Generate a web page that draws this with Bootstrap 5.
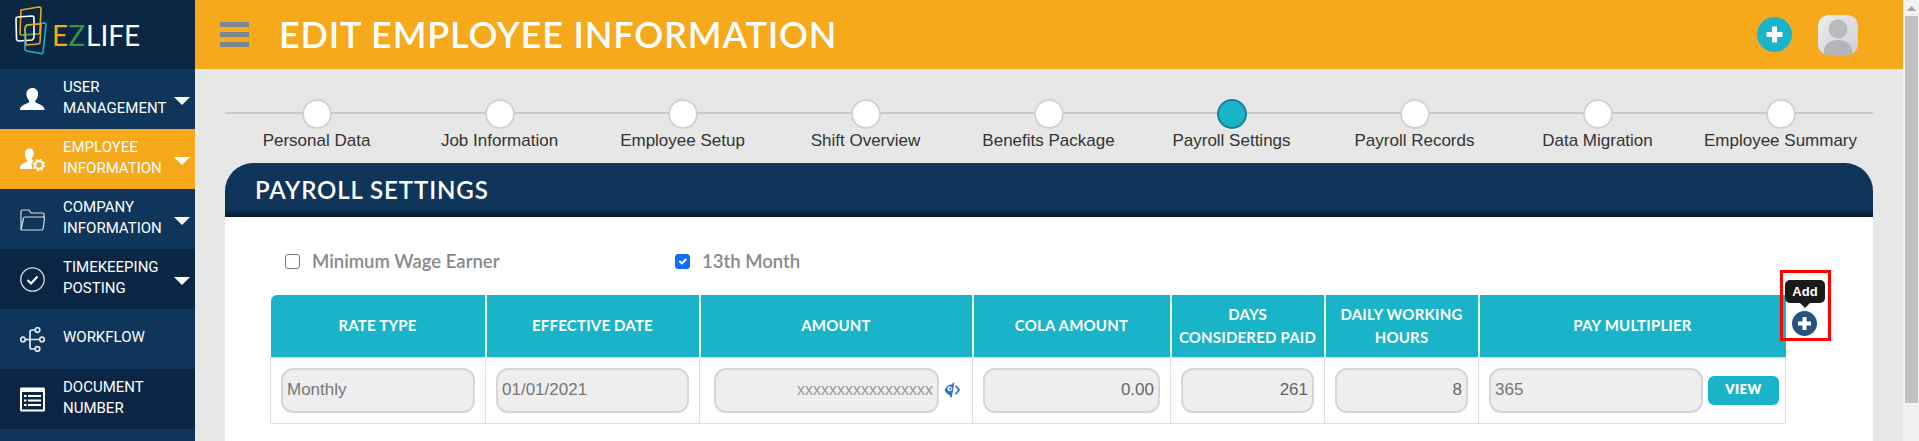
<!DOCTYPE html>
<html lang="en">
<head>
<meta charset="utf-8">
<title>Edit Employee Information</title>
<link rel="stylesheet" href="https://cdn.jsdelivr.net/npm/bootstrap@5.3.0/dist/css/bootstrap.min.css">
<style>
html,body{height:441px;overflow:hidden;margin:0}
body{background:#e7e7e7;font-family:"Liberation Sans",Arial,sans-serif}
.shell{height:441px;width:1919px}
.side{width:195px;flex:none;background:#10355a;overflow:hidden}
.brand{height:69px;background:#0a2744;padding-left:14px;padding-bottom:6px}
.brand-word{font-family:Lato,sans-serif;font-size:28px;line-height:1;font-weight:400;color:#fff;margin-left:1px;padding-top:6px}
.brand-word .e{color:#f7a91c}.brand-word .z{color:#3f8f46;margin-right:1px}
.mitem{height:60px;padding:0 5px 0 20px;background:#10355a;color:#fff;font-family:Roboto,sans-serif;font-size:15px;line-height:21px;text-transform:uppercase}
.mitem.alt{background:#0a2644}
.mitem.on{background:#f7a91c}
.mico{width:25px;height:25px;flex:none;margin-right:18px;display:block}
.mtext{flex:1;padding-bottom:3px}
.caret-w{width:0;height:0;border-left:8px solid transparent;border-right:8px solid transparent;border-top:8px solid #fff;flex:none;margin-top:3px}
.mainarea{flex:1;min-width:0}
.topbar{height:69px;background:#f7a91c;padding-left:25px;padding-right:45px}
.burger{width:29px;flex:none;margin-right:30px}
.burger span{display:block;height:5px;background:#7d8792;margin-bottom:5px}
.burger span:last-child{margin-bottom:0}
.ptitle{font-family:Lato,sans-serif;font-weight:600;font-size:36px;letter-spacing:.85px;color:#fff;margin:0 0 1px;line-height:1;flex:1}
.plus-top{width:35px;height:35px;border-radius:50%;background:#1ab4c9;margin-right:26px;flex:none}
.avatar{width:40px;height:40px;border-radius:10px;flex:none;display:block}
.canvas{padding:30px 30px 0;height:372px;overflow:hidden}
.stepper{height:64px;position:relative;background:linear-gradient(#c9c9c9,#c9c9c9) 0 13px/100% 2px no-repeat}
.stepcell{width:183px;flex:none;text-align:center}
.dot{width:30px;height:30px;border-radius:50%;background:#fff;border:2px solid #d2d2d2;margin:0 auto 1px}
.dot.cur{background:#1ab4c9;border-color:#1d7f9f}
.steplbl{font-size:17px;line-height:22px;color:#333;white-space:nowrap}
.sheet{background:#fff;border-radius:28px 28px 0 0;height:278px}
.sheet-head{height:54px;background:linear-gradient(#10355a 0,#10355a 46px,#04182c 54px);border-radius:28px 28px 0 0;padding-left:30px;color:#fff;font-family:Lato,sans-serif;font-weight:600;font-size:24px;letter-spacing:.9px}
.sheet-body{padding:30px 45px 0 45px}
.checks{height:49px;align-items:flex-start;margin-bottom:-1px}
.chk{flex:none;font-family:Lato,sans-serif;font-weight:600;font-size:18.500px;line-height:30px;color:#8a8a8a;margin:-1px 0 0}
.chk-first{width:390px}
.chk .form-check-input{width:15px;height:15px;margin:0 12px 0 15px;border:1px solid #777;border-radius:3px;vertical-align:-1px;float:none;opacity:1}
.chk .form-check-input:checked{background-color:#0d6efd;border-color:#0d6efd}
.gridwrap{position:relative;width:1515px}
.paytable{table-layout:fixed;width:1515px;margin:0;border-collapse:collapse}
.paytable .c1{width:215px}.paytable .c2{width:214px}.paytable .c3{width:273px}.paytable .c4{width:198px}.paytable .c5{width:154px}.paytable .c6{width:154px}.paytable .c7{width:307px}
.paytable th{background:#1ab4c9;color:#fff;font-family:Lato,sans-serif;font-weight:700;font-size:15px;letter-spacing:.2px;line-height:23px;height:62px;padding:0 4px;text-align:center;vertical-align:middle;border:0;border-right:2px solid #e8f7f9;box-shadow:none}
.paytable th:first-child{border-top-left-radius:6px}
.paytable th:last-child{border-right:0}
.paytable td{height:65px;padding:10px;border:1px solid #e0e0e0;vertical-align:middle;background:#fff;box-shadow:none}
.paytable td.amt{padding:10px 12px 10px 14px}
.paytable td.mul{padding:10px 6px 10px 10px}
.fld{height:45px;background:#eee!important;border:2px solid #d6d6d6;border-radius:12px;font-size:17px;color:#777;padding:0 4px;box-shadow:none}
.fld.end{text-align:right;color:#666}
.fld::placeholder{color:#999;opacity:1;font-size:16px}
.eye{width:16px;height:16px;flex:none;margin-left:5px}
.vbtn{width:71px;height:29px;flex:none;background:#1ab4c9;border:0;border-radius:6px;color:#fff;font-family:Lato,sans-serif;font-weight:800;font-size:13px;letter-spacing:.5px;padding:0;margin-left:5px}
.redbox{position:absolute;left:1510px;top:-25px;width:51px;height:71px;border:3px solid #f00}
.tipbox{position:absolute;left:2px;top:7px;width:40px;height:23px;background:#1a1a1a;border-radius:5px;color:#fff;font-size:13px;font-weight:700;line-height:23px;text-align:center}
.tipbox::after{content:"";position:absolute;left:15px;top:23px;border-left:5px solid transparent;border-right:5px solid transparent;border-top:5px solid #1a1a1a}
.plus-add{position:absolute;left:9px;top:38px;width:25px;height:25px;display:block}
.sbar{width:16px;flex:none;background:#f1f1f1;height:441px}
.sbtn{height:16px}
.sthumb{height:387px;background:#c1c1c1;margin-left:2px;margin-right:1px}
</style>
</head>
<body>
<div class="shell d-flex">
  <nav class="side">
    <div class="brand d-flex align-items-center">
      <svg width="37" height="52" viewBox="0 0 37 52" fill="none" stroke-width="1.6" stroke-linejoin="round">
        <path d="M7 4 L25 1 Q27 1 27 3 L26 26 Q26 28 24 28 L8 29 Q6 29 6 27 Z" stroke="#f0a31f"/>
        <path d="M7 29 L24 28" stroke="#4a9a4a"/>
        <path d="M2 13 Q2 11 4 11 L18 10 Q20 10 20 12 L20 31 Q20 33 18 34 L5 35 Q3 35 2.500 33 Z" stroke="#fff"/>
        <path d="M11 23 Q11 20 13 19 L30 17 Q32 17 32 19 L29 46 Q29 48 27 47.500 L13 45 Q11 45 11 43 Z" stroke="#1ab4c9"/>
        <path d="M11 23 Q11 20 13 19 L27 18 L26 36 Q26 38 24 38 L12 39 Z" stroke="#f0a31f"/>
      </svg>
      <span class="brand-word"><span class="e">E</span><span class="z">Z</span>LIFE</span>
    </div>
    <div class="mitem d-flex align-items-center">
      <svg class="mico" viewBox="0 0 25 25"><path fill="#fff" d="M12.500 1c3.400 0 5.600 2.500 5.600 6 0 2.700-1.100 4.800-2.500 6.300-.5.600-.5 1.600.2 2.100 2 1.300 8.200 2.700 8.700 6.600v1H0v-1c.5-3.900 6.700-5.300 8.700-6.600.7-.5.700-1.500.2-2.100C7.500 11.800 6.400 9.700 6.400 7c0-3.500 2.700-6 6.100-6z"/></svg>
      <span class="mtext">User Management</span><span class="caret-w"></span>
    </div>
    <div class="mitem on d-flex align-items-center">
      <svg class="mico" viewBox="0 0 25 25"><path fill="#fff" d="M9.500 1.500c2.600 0 4.400 1.900 4.400 4.600 0 2.100-.9 3.700-2 4.900-.4.500-.4 1.200.1 1.600.5.300 1 .6 1.700.9-1.300 1.200-2.100 2.900-2.100 4.700 0 1.400.4 2.600 1.100 3.700H0v-1.900c.4-3 5.200-4.100 6.800-5.200.5-.4.500-1.200.1-1.700C5.800 11.900 5 10.200 5 6.100c0-2.700 2-4.600 4.500-4.600z"/><circle cx="19" cy="18" r="3.900" fill="none" stroke="#fff" stroke-width="2.200"/><circle cx="19" cy="18" r="5.600" fill="none" stroke="#fff" stroke-width="1.500" stroke-dasharray="2 2.400"/></svg>
      <span class="mtext">Employee Information</span><span class="caret-w"></span>
    </div>
    <div class="mitem d-flex align-items-center">
      <svg class="mico" viewBox="0 0 25 25" fill="none" stroke="#d9dde2" stroke-width="1.200" stroke-linejoin="round"><path d="M1 23V4.500Q1 3 2.500 3H9l2 3h11.500Q24 6 24 7.500V11"/><path d="M1 23h20.500Q23 23 23.200 21.500L24.500 11.500Q24.500 10 23 10H5Q3.700 10 3.500 11.500L1.200 22"/></svg>
      <span class="mtext">Company Information</span><span class="caret-w"></span>
    </div>
    <div class="mitem alt d-flex align-items-center">
      <svg class="mico" viewBox="0 0 25 25" fill="none" stroke="#d9dde2"><circle cx="12.500" cy="12.500" r="11.700" stroke-width="1.300"/><path d="M7.500 13l3.500 3.500 6.500-7" stroke="#fff" stroke-width="2"/></svg>
      <span class="mtext">Timekeeping Posting</span><span class="caret-w"></span>
    </div>
    <div class="mitem d-flex align-items-center">
      <svg class="mico" viewBox="0 0 25 25" fill="none" stroke="#e6e9ec" stroke-width="1.700"><circle cx="3" cy="12.500" r="2.300"/><circle cx="17.500" cy="3" r="2.300"/><circle cx="22" cy="12.500" r="2.300"/><circle cx="17.500" cy="22" r="2.300"/><path d="M5.300 12.500h14.400M15.200 3H12Q10 3 10 5v15q0 2 2 2h3.200"/></svg>
      <span class="mtext">Workflow</span>
    </div>
    <div class="mitem alt d-flex align-items-center">
      <svg class="mico" viewBox="0 0 25 25"><path fill="#fff" d="M1.500 0.500h22Q25 0.500 25 2v21q0 1.500-1.500 1.500h-22Q0 24.500 0 23V2Q0 0.500 1.500 0.500z"/><rect x="2" y="5" width="21" height="17.500" fill="#0a2644"/><g fill="#fff"><rect x="4" y="8" width="2.500" height="2"/><rect x="8" y="8" width="13" height="2"/><rect x="4" y="12.500" width="2.500" height="2"/><rect x="8" y="12.500" width="13" height="2"/><rect x="4" y="17" width="2.500" height="2"/><rect x="8" y="17" width="13" height="2"/></g></svg>
      <span class="mtext">Document Number</span>
    </div>
    <div class="mitem"></div>
  </nav>
  <div class="mainarea">
    <header class="topbar d-flex align-items-center">
      <div class="burger"><span></span><span></span><span></span></div>
      <h1 class="ptitle">EDIT EMPLOYEE INFORMATION</h1>
      <svg class="plus-top" viewBox="0 0 35 35"><path fill="#fff" d="M15 9.500h5V15h5.500v5H20v5.500h-5V20H9.500v-5H15z"/></svg>
      <svg class="avatar" viewBox="0 0 40 40">
        <defs><linearGradient id="avbg" x1="0" y1="0" x2="1" y2="1"><stop offset="0" stop-color="#eceded"/><stop offset="1" stop-color="#cfd0d3"/></linearGradient></defs>
        <rect width="40" height="40" rx="10" fill="url(#avbg)"/><circle cx="20" cy="14" r="9.500" fill="#b9babe"/><path d="M6 40V36C6 29 12 25 20 25s14 4 14 11v4z" fill="#b4b5b9"/>
      </svg>
    </header>
    <main class="canvas">
      <div class="stepper d-flex">
        <div class="stepcell"><div class="dot"></div><div class="steplbl">Personal Data</div></div>
        <div class="stepcell"><div class="dot"></div><div class="steplbl">Job Information</div></div>
        <div class="stepcell"><div class="dot"></div><div class="steplbl">Employee Setup</div></div>
        <div class="stepcell"><div class="dot"></div><div class="steplbl">Shift Overview</div></div>
        <div class="stepcell"><div class="dot"></div><div class="steplbl">Benefits Package</div></div>
        <div class="stepcell"><div class="dot cur"></div><div class="steplbl">Payroll Settings</div></div>
        <div class="stepcell"><div class="dot"></div><div class="steplbl">Payroll Records</div></div>
        <div class="stepcell"><div class="dot"></div><div class="steplbl">Data Migration</div></div>
        <div class="stepcell"><div class="dot"></div><div class="steplbl">Employee Summary</div></div>
      </div>
      <section class="sheet">
        <div class="sheet-head d-flex align-items-center">PAYROLL SETTINGS</div>
        <div class="sheet-body">
          <div class="checks d-flex">
            <label class="chk chk-first"><input class="form-check-input" type="checkbox">Minimum Wage Earner</label>
            <label class="chk"><input class="form-check-input" type="checkbox" checked>13th Month</label>
          </div>
          <div class="gridwrap">
            <table class="table paytable">
              <colgroup><col class="c1"><col class="c2"><col class="c3"><col class="c4"><col class="c5"><col class="c6"><col class="c7"></colgroup>
              <thead><tr><th>RATE TYPE</th><th>EFFECTIVE DATE</th><th>AMOUNT</th><th>COLA AMOUNT</th><th>DAYS<br>CONSIDERED PAID</th><th>DAILY WORKING HOURS</th><th>PAY MULTIPLIER</th></tr></thead>
              <tbody><tr>
                <td><input class="form-control fld" value="Monthly" readonly></td>
                <td><input class="form-control fld" value="01/01/2021" readonly></td>
                <td class="amt"><div class="d-flex align-items-center"><input class="form-control fld end" placeholder="xxxxxxxxxxxxxxxxx" readonly>
                  <svg class="eye" viewBox="0 0 16 16"><path fill="#2f6fd0" d="M8 2.500C4.500 2.500 1.800 5.200.5 8c1 2.300 2.900 4.400 5.300 5.200l.6 2.300 1.500-.4L10.300.9 8.800.5 8.300 2.500z"/><circle cx="5.800" cy="6.800" r="2.400" fill="#fff"/><circle cx="6.300" cy="6.800" r="1.100" fill="#2f6fd0"/><path fill="none" stroke="#2f6fd0" stroke-width="1.700" d="M11.500 3.800 15 8l-3.500 4.200"/></svg></div></td>
                <td><input class="form-control fld end" value="0.00" readonly></td>
                <td><input class="form-control fld end" value="261" readonly></td>
                <td><input class="form-control fld end" value="8" readonly></td>
                <td class="mul"><div class="d-flex align-items-center"><input class="form-control fld" value="365" readonly><button type="button" class="btn vbtn">VIEW</button></div></td>
              </tr></tbody>
            </table>
            <div class="redbox">
              <div class="tipbox">Add</div>
              <svg class="plus-add" viewBox="0 0 25 25"><circle cx="12.500" cy="12.500" r="12.500" fill="#24547f"/><path fill="#fff" d="M10.500 6h4v4.500H19v4h-4.500V19h-4v-4.500H6v-4h4.500z"/></svg>
            </div>
          </div>
        </div>
      </section>
    </main>
  </div>
  <aside class="sbar d-flex flex-column">
    <div class="sbtn d-flex justify-content-center align-items-center"><svg width="9" height="5" viewBox="0 0 9 5"><path d="M4.500 0 9 5H0z" fill="#a3a3a3"/></svg></div>
    <div class="sthumb"></div>
  </aside>
</div>
<script src="https://cdn.jsdelivr.net/npm/bootstrap@5.3.0/dist/js/bootstrap.bundle.min.js"></script>
</body>
</html>
